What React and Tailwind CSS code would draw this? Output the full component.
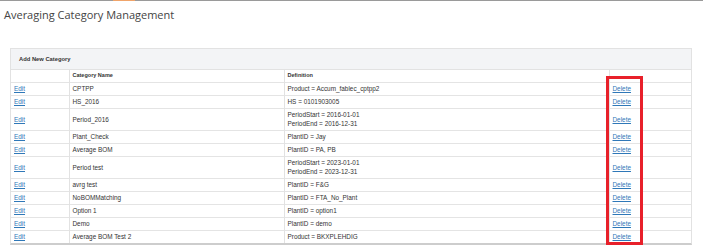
const rows = [
  { name: "CPTPP", def: ["Product = Accum_fablec_cptpp2"] },
  { name: "HS_2016", def: ["HS = 0101903005"] },
  { name: "Period_2016", def: ["PeriodStart = 2016-01-01", "PeriodEnd = 2016-12-31"] },
  { name: "Plant_Check", def: ["PlantID = Jay"] },
  { name: "Average BOM", def: ["PlantID = PA, PB"] },
  { name: "Period test", def: ["PeriodStart = 2023-01-01", "PeriodEnd = 2023-12-31"] },
  { name: "avrg test", def: ["PlantID = F&G"] },
  { name: "NoBOMMatching", def: ["PlantID = FTA_No_Plant"] },
  { name: "Option 1", def: ["PlantID = option1"] },
  { name: "Demo", def: ["PlantID = demo"] },
  { name: "Average BOM Test 2", def: ["Product = BKXPLEHDIG"] },
];

export default function App() {
  return (
    <div className="relative w-[703px] h-[251px] bg-white overflow-hidden font-['Liberation_Sans',Arial,sans-serif] text-[#333]">
      {/* top nav strip */}
      <div className="flex h-px bg-[#9a9a9a]">
        <div className="ml-[113px] w-[22px] bg-[#f0a46a]" />
      </div>

      <h1 className="pl-[4px] pt-[6px] text-[11px] leading-[16px] font-['Open_Sans',sans-serif] text-[#444]">
        Averaging Category Management
      </h1>

      <div className="ml-[10px] mt-[25px] w-[682px] border border-[#e2e2e2] border-b-2 border-b-[#cdcdcd]">
        <div className="h-[21px] flex items-center bg-[#f3f4f6] border-b border-[#e2e2e2] pl-[8px] text-[5.8px] font-bold text-[#333]">
          Add New Category
        </div>
        <table className="w-full border-collapse table-fixed text-[6.4px] leading-[9px]">
          <colgroup>
            <col className="w-[58px]" />
            <col className="w-[215px]" />
            <col className="w-[325px]" />
            <col />
          </colgroup>
          <thead>
            <tr className="h-[12px]">
              <th className="border-r border-[#e2e2e2]"></th>
              <th className="border-r border-[#e2e2e2] text-left font-bold text-[5.5px] pl-[3px]">Category Name</th>
              <th className="border-r border-[#e2e2e2] text-left font-bold text-[5.5px] pl-[3px]">Definition</th>
              <th></th>
            </tr>
          </thead>
          <tbody>
            {rows.map((r) => (
              <tr key={r.name} className="border-t border-[#e4e4e4]">
                <td className="border-r border-[#e2e2e2] pl-[3px] py-[1.5px] align-middle">
                  <a href="#" className="text-[#2f78b8] underline">Edit</a>
                </td>
                <td className="border-r border-[#e2e2e2] pl-[3px] py-[1.5px] align-middle">{r.name}</td>
                <td className="border-r border-[#e2e2e2] pl-[3px] py-[1.5px] align-middle">
                  {r.def.map((d) => (
                    <div key={d}>{d}</div>
                  ))}
                </td>
                <td className="pl-[3px] py-[1.5px] align-middle">
                  <a href="#" className="text-[#2f78b8] underline">Delete</a>
                </td>
              </tr>
            ))}
          </tbody>
        </table>
      </div>

      {/* red highlight annotation */}
      <div className="absolute left-[606px] top-[76px] w-[37px] h-[169px] border-[3px] border-[#e8202a]" />
    </div>
  );
}
